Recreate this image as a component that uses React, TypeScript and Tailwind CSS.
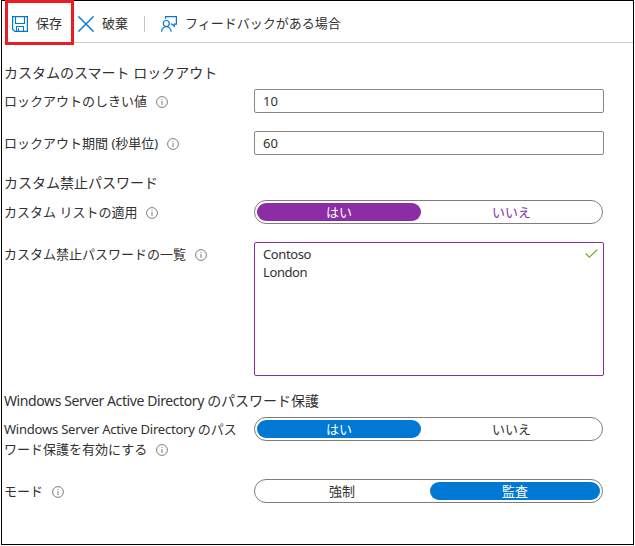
import type { ReactNode } from 'react';

function InfoIcon() {
  return (
    <svg width="12" height="12" viewBox="0 0 12 12" fill="none" className="ml-[9px] inline-block shrink-0 align-[-2px]">
      <circle cx="6" cy="6" r="5.4" stroke="#777" strokeWidth="0.95" />
      <path d="M6 5v4M6 3v1" stroke="#858585" strokeWidth="1.1" />
    </svg>
  );
}

function SaveIcon() {
  return (
    <svg width="16" height="16" viewBox="0 0 16 16" fill="none" stroke="#0078d4" className="shrink-0">
      <path d="M.6.6h14.8v14.8H2.8L.6 13.2Z" strokeWidth="1.2" />
      <path d="M3.5.6v6.9h9V.6M4.5 15.4v-4.9h7v4.9M6.5 12.3v3" strokeWidth="1.1" />
    </svg>
  );
}

function CloseIcon() {
  return (
    <svg width="16" height="16" viewBox="0 0 16 16" fill="none" stroke="#0078d4" strokeWidth="1.4" className="shrink-0">
      <path d="m.4.4 15.2 15.2M15.6.4.4 15.6" />
    </svg>
  );
}

function FeedbackIcon() {
  return (
    <svg width="16" height="16" viewBox="0 0 16 16" fill="none" stroke="#0078d4" strokeWidth="1.2" className="shrink-0">
      <path d="M4.5 2.8V.6h10.9v7.6h-2.2v2.2L11 8.2H9.8" />
      <circle cx="5.3" cy="7.5" r="3" />
      <path d="M.6 15.8c0-3 2.1-5.2 4.7-5.2s4.9 2.2 4.9 5.2" />
    </svg>
  );
}

function Heading({ children }: { children: ReactNode }) {
  return <h2 className="h-5 whitespace-nowrap text-[14px] leading-5">{children}</h2>;
}

function Row({ label, className, children }: { label: ReactNode; className: string; children: ReactNode }) {
  return (
    <div className={`flex items-start ${className}`}>
      <div className="w-[250px] shrink-0 whitespace-nowrap pt-[2px] leading-5">
        {label}
        <InfoIcon />
      </div>
      {children}
    </div>
  );
}

function NumberField({ value }: { value: string }) {
  return (
    <input
      readOnly
      value={value}
      className="h-6 w-[350px] rounded-[2px] border border-[#8a8886] px-2 pb-px text-[13px] outline-none"
    />
  );
}

function Toggle({ options, selected, purple }: { options: string[]; selected: number; purple?: boolean }) {
  const fill = purple ? 'bg-[#8c2da5] text-white' : 'bg-[#0078d4] text-white';
  const plain = purple ? 'text-[#8c2da5]' : '';
  return (
    <div className="flex h-6 w-[349px] justify-between rounded-full border border-[#7d7d7d] p-[2px]">
      {options.map((option, i) => (
        <button
          key={option}
          className={`h-[18px] rounded-full text-center leading-[18px] ${i === 0 ? 'w-[164px]' : 'w-[170px]'} ${i === selected ? fill : plain} ${i === 1 && selected === 0 ? 'pr-[7px]' : ''} ${i === 0 && selected === 1 ? 'pl-[6px]' : ''}`}
        >
          {option}
        </button>
      ))}
    </div>
  );
}

export default function App() {
  return (
    <div className="h-[546px] w-[635px] bg-white pl-px font-['Noto_Sans','Noto_Sans_CJK_JP',sans-serif] text-[13px] text-[#323130]">
      <main className="h-[545px] w-[633px] border border-black">
        <header className="relative ml-[2px] flex h-[42px] items-center border-b border-[#d2d0ce] pl-2 pt-1">
          <div className="absolute -top-px left-px h-[45px] w-[69px] border-[3px] border-[#ed1c24]" />
          <SaveIcon />
          <span className="ml-2 w-[42px]">保存</span>
          <CloseIcon />
          <span className="ml-2 w-[42px]">破棄</span>
          <div className="h-4 w-px bg-[#c8c6c4]" />
          <div className="w-4" />
          <FeedbackIcon />
          <span className="ml-2 whitespace-nowrap">フィードバックがある場合</span>
        </header>
        <section className="pl-[2px] pt-5">
          <Heading>カスタムのスマート ロックアウト</Heading>
          <Row label="ロックアウトのしきい値" className="mt-[6px] h-[42px]">
            <NumberField value="10" />
          </Row>
          <Row label="ロックアウト期間 (秒単位)" className="h-[42px]">
            <NumberField value="60" />
          </Row>
          <Heading>カスタム禁止パスワード</Heading>
          <Row label="カスタム リストの適用" className="mt-[7px] h-[42px]">
            <Toggle options={['はい', 'いいえ']} selected={0} purple />
          </Row>
          <Row label="カスタム禁止パスワードの一覧" className="h-[149px]">
            <div className="flex h-[134px] w-[350px] justify-between rounded-[2px] border border-[#8c2da5] pl-2 pr-[5px] pt-[2px]">
              <div className="leading-[18px] tracking-[-0.4px]">
                <p>Contoso</p>
                <p>London</p>
              </div>
              <svg width="13" height="10" viewBox="0 0 13 10" fill="none" className="mt-1">
                <path d="m.7 4.5 3.6 3.7L12.3.7" stroke="#6bb02a" strokeWidth="1.2" />
              </svg>
            </div>
          </Row>
          <Heading>
            <span className="tracking-[-0.41px]">Windows Server Active Directory </span>のパスワード保護
          </Heading>
          <Row
            label={
              <>
                <span className="tracking-[-0.22px]">Windows Server Active Directory </span>のパス
                <br />
                ワード保護を有効にする
              </>
            }
            className="mt-[6px] h-[62px]"
          >
            <Toggle options={['はい', 'いいえ']} selected={0} />
          </Row>
          <Row label="モード" className="">
            <Toggle options={['強制', '監査']} selected={1} />
          </Row>
        </section>
      </main>
    </div>
  );
}
